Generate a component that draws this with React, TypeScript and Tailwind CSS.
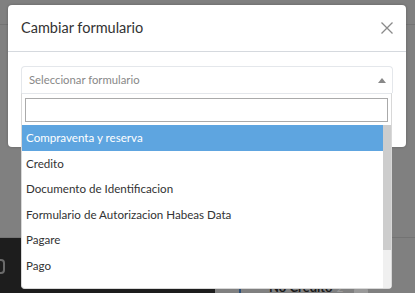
const options = [
  "Compraventa y reserva",
  "Credito",
  "Documento de Identificacion",
  "Formulario de Autorizacion Habeas Data",
  "Pagare",
  "Pago",
];

function Backdrop() {
  return (
    <div className="absolute inset-0 flex flex-col bg-[#808080]">
      <div className="h-[25px] border-b border-[#737373]" />
      <div className="flex-1" />
      <div className="flex h-[56px] border-t border-[#737373]">
        <div className="w-[215px] bg-[#1d1d1d] pt-[21px]">
          <div className="ml-[-6px] h-[15px] w-[11px] rounded-sm border-2 border-[#6a6a6a]" />
        </div>
        <div className="flex flex-1 items-end pl-[24px]">
          <div className="h-[16px] w-[2px] bg-[#2c4f77]" />
          <span className="ml-[28px] text-[13px] font-bold leading-[12px] text-[#1a1a1a]">
            No Credito
          </span>
          <span className="ml-[4px] text-[12px] leading-[10px] text-[#9a9a9a]">2</span>
          <div className="mb-[-4px] ml-[10px] h-[10px] w-[14px] rounded-sm bg-[#999]" />
        </div>
      </div>
    </div>
  );
}

export default function App() {
  return (
    <div className="relative h-[293px] w-[415px] overflow-hidden [font-family:Lato,sans-serif]">
      <Backdrop />

      {/* modal */}
      <div className="absolute left-[8px] top-[5px] w-[398px] rounded-[4px] bg-white shadow-[0_0_3px_rgba(0,0,0,0.25)]">
        <div className="flex h-[47px] items-center justify-between border-b border-[#d5d9de] pl-[13px] pr-[12px]">
          <span className="text-[14.5px] text-[#333]">Cambiar formulario</span>
          <svg width="14" height="14" viewBox="0 0 14 14" className="text-[#8a8a8a]">
            <path d="M1.5 1.5 L12.5 12.5 M12.5 1.5 L1.5 12.5" stroke="currentColor" strokeWidth="1.3" />
          </svg>
        </div>
        <div className="h-[95px] px-[13px] pt-[14px]">
          <div className="flex h-[27px] items-center justify-between rounded-t-[4px] border border-b-0 border-[#e4e7eb] pl-[7px] pr-[6px]">
            <span className="text-[11.3px] text-[#888]">Seleccionar formulario</span>
            <svg width="8" height="5" viewBox="0 0 8 5">
              <path d="M0 5 L4 0 L8 5 Z" fill="#888" />
            </svg>
          </div>
        </div>
      </div>

      {/* dropdown */}
      <div className="absolute left-[21px] top-[93px] flex h-[196px] w-[371px] flex-col rounded-b-[4px] border border-t-[#e4e7eb] border-x-[#d8d8d8] border-b-[#d8d8d8] bg-white">
        <div className="px-[3px] pt-[4px] pb-[3px]">
          <div className="h-[24px] border border-[#aaa]" />
        </div>
        <div className="flex flex-1 overflow-hidden">
          <ul className="flex-1">
            {options.map((o, i) => (
              <li
                key={o}
                className={
                  i === 0
                    ? "flex h-[25.5px] items-center bg-[#5ea5e0] pl-[4px] text-[11.6px] text-white"
                    : "flex h-[25.5px] items-center pl-[4px] text-[11.6px] text-[#333]"
                }
              >
                {o}
              </li>
            ))}
          </ul>
          <div className="flex w-[8px] flex-col bg-[#f0f0f0]">
            <div className="h-[125px] bg-[#cdcdcd]" />
          </div>
        </div>
      </div>
    </div>
  );
}
